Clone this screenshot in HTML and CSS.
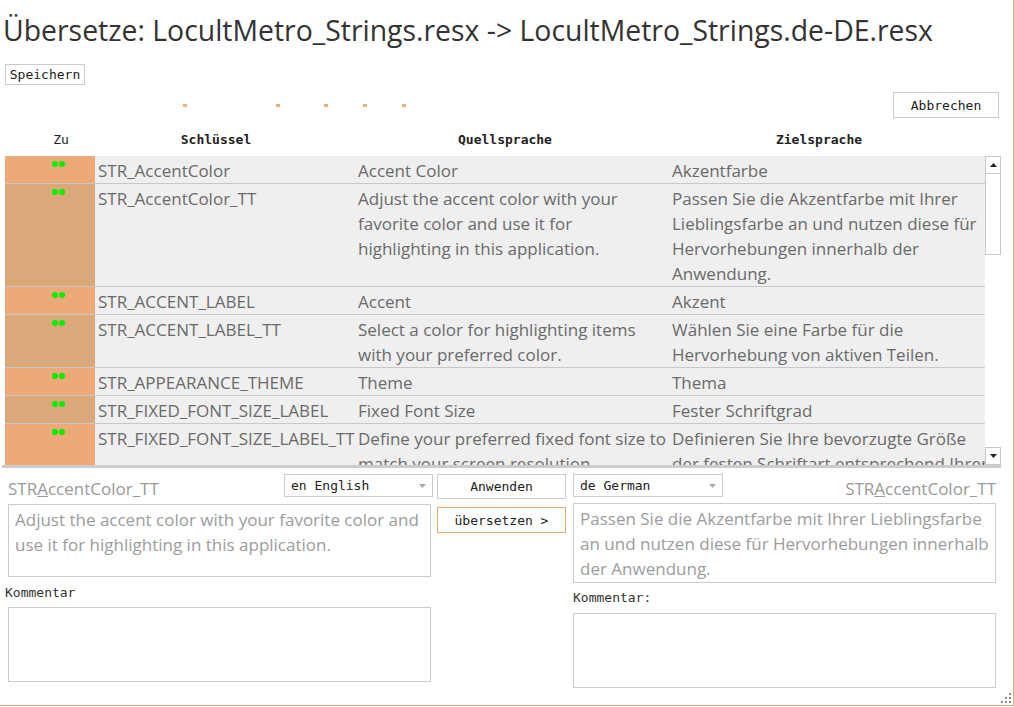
FILE: index.html
```html
<!DOCTYPE html>
<html lang="de">
<head>
<meta charset="utf-8">
<title>Übersetze</title>
<link rel="stylesheet" href="styles.css">
</head>
<body>
<div class="window">
  <h1 class="title">Übersetze: LocultMetro_Strings.resx -&gt; LocultMetro_Strings.de-DE.resx</h1>
  <div class="toolbar"><button class="btn btn-save">Speichern</button></div>
  <div class="progress-row">
    <div class="dots"><span class="pd pd1"></span><span class="pd pd2"></span><span class="pd pd3"></span><span class="pd pd4"></span><span class="pd pd5"></span></div>
    <button class="btn btn-cancel">Abbrechen</button>
  </div>
  <div class="grid-head">
    <div class="h h-zu">Zu</div>
    <div class="h h-key">Schlüssel</div>
    <div class="h h-src">Quellsprache</div>
    <div class="h h-tgt">Zielsprache</div>
  </div>
  <div class="grid">
    <div class="rows">
      <div class="row odd">
        <div class="c-status"><span class="dot"></span><span class="dot"></span></div>
        <div class="c">STR_AccentColor</div>
        <div class="c">Accent Color</div>
        <div class="c">Akzentfarbe</div>
      </div>
      <div class="row even">
        <div class="c-status"><span class="dot"></span><span class="dot"></span></div>
        <div class="c">STR_AccentColor_TT</div>
        <div class="c">Adjust the accent color with your<br>favorite color and use it for<br>highlighting in this application.</div>
        <div class="c">Passen Sie die Akzentfarbe mit Ihrer<br>Lieblingsfarbe an und nutzen diese für<br>Hervorhebungen innerhalb der<br>Anwendung.</div>
      </div>
      <div class="row odd">
        <div class="c-status"><span class="dot"></span><span class="dot"></span></div>
        <div class="c">STR_ACCENT_LABEL</div>
        <div class="c">Accent</div>
        <div class="c">Akzent</div>
      </div>
      <div class="row even">
        <div class="c-status"><span class="dot"></span><span class="dot"></span></div>
        <div class="c">STR_ACCENT_LABEL_TT</div>
        <div class="c">Select a color for highlighting items<br>with your preferred color.</div>
        <div class="c">Wählen Sie eine Farbe für die<br>Hervorhebung von aktiven Teilen.</div>
      </div>
      <div class="row odd">
        <div class="c-status"><span class="dot"></span><span class="dot"></span></div>
        <div class="c">STR_APPEARANCE_THEME</div>
        <div class="c">Theme</div>
        <div class="c">Thema</div>
      </div>
      <div class="row even">
        <div class="c-status"><span class="dot"></span><span class="dot"></span></div>
        <div class="c">STR_FIXED_FONT_SIZE_LABEL</div>
        <div class="c">Fixed Font Size</div>
        <div class="c">Fester Schriftgrad</div>
      </div>
      <div class="row odd">
        <div class="c-status"><span class="dot"></span><span class="dot"></span></div>
        <div class="c">STR_FIXED_FONT_SIZE_LABEL_TT</div>
        <div class="c">Define your preferred fixed font size to<br>match your screen resolution.</div>
        <div class="c">Definieren Sie Ihre bevorzugte Größe<br>der festen Schriftart entsprechend Ihrer<br>Bildschirmauflösung.</div>
      </div>
    </div>
    <div class="scrollbar">
      <div class="sb-btn sb-up"><svg width="7" height="4" viewBox="0 0 7 4"><path d="M0 4 L3.5 0 L7 4 Z" fill="#222"/></svg></div>
      <div class="sb-thumb"></div>
      <div class="sb-track"></div>
      <div class="sb-btn sb-down"><svg width="7" height="4" viewBox="0 0 7 4"><path d="M0 0 L3.5 4 L7 0 Z" fill="#222"/></svg></div>
    </div>
  </div>
  <div class="splitter"></div>
  <div class="editor">
    <div class="col col-left">
      <div class="top">
        <span class="keylabel">STR<u>A</u>ccentColor_TT</span>
        <div class="combo combo-en"><span>en English</span><svg width="7" height="4" viewBox="0 0 7 4"><path d="M0 0 L3.5 4 L7 0 Z" fill="#aaa"/></svg></div>
      </div>
      <div class="text text-src">Adjust the accent color with your favorite color and use it for highlighting in this application.</div>
      <div class="lbl lbl-left">Kommentar</div>
      <div class="comment comment-left"></div>
    </div>
    <div class="col col-mid">
      <button class="btn btn-apply">Anwenden</button>
      <button class="btn btn-translate">übersetzen &gt;</button>
    </div>
    <div class="col col-right">
      <div class="top">
        <div class="combo combo-de"><span>de German</span><svg width="7" height="4" viewBox="0 0 7 4"><path d="M0 0 L3.5 4 L7 0 Z" fill="#aaa"/></svg></div>
        <span class="keylabel">STR<u>A</u>ccentColor_TT</span>
      </div>
      <div class="text text-tgt">Passen Sie die Akzentfarbe mit Ihrer Lieblingsfarbe an und nutzen diese für Hervorhebungen innerhalb der Anwendung.</div>
      <div class="lbl lbl-right">Kommentar:</div>
      <div class="comment comment-right"></div>
    </div>
  </div>
  <svg class="grip" width="10" height="10" viewBox="0 0 10 10"><g fill="#8a8a8a"><rect x="8" y="0" width="2" height="2"/><rect x="4" y="4" width="2" height="2"/><rect x="8" y="4" width="2" height="2"/><rect x="0" y="8" width="2" height="2"/><rect x="4" y="8" width="2" height="2"/><rect x="8" y="8" width="2" height="2"/></g></svg>
</div>
</body>
</html>
```
FILE: styles.css
```css
html, body {
  margin: 0;
  padding: 0;
  background: #fff;
}
.window {
  position: relative;
  width: 1013px;
  height: 705px;
  border-right: 1px solid #dfa983;
  border-bottom: 1px solid #dfa983;
  overflow: hidden;
  font-family: "Open Sans", "Noto Sans", sans-serif;
}
.title {
  margin: 0;
  padding: 12px 0 0 3px;
  height: 36px;
  font-family: "Open Sans", "Noto Sans", sans-serif;
  font-weight: 400;
  font-size: 28.4px;
  line-height: 36px;
  color: #333;
  white-space: nowrap;
}
.btn {
  font-family: "DejaVu Sans Mono", "Liberation Mono", monospace;
  font-size: 13px;
  color: #222;
  background: #fff;
  border: 1px solid #ccc;
  padding: 0;
  margin: 0;
  box-sizing: border-box;
}
.toolbar {
  display: flex;
  margin-top: 16px;
  padding-left: 5px;
  height: 21px;
}
.btn-save {
  width: 80px;
  height: 21px;
}
.progress-row {
  margin-top: 7px;
  display: flex;
  align-items: center;
  justify-content: space-between;
  padding-right: 14px;
  height: 26px;
}
.dots {
  display: flex;
  align-items: center;
}
.pd {
  width: 4px;
  height: 3px;
  background: #f0ae7c;
}
.pd1 { margin-left: 183px; }
.pd2 { margin-left: 89px; }
.pd3 { margin-left: 44px; }
.pd4 { margin-left: 35px; }
.pd5 { margin-left: 35px; }
.btn-cancel {
  width: 106px;
  height: 26px;
}
.grid-head {
  display: grid;
  grid-template-columns: 90px 260px 314px 316px;
  margin: 14px 0 0 5px;
  height: 24px;
  font-family: "DejaVu Sans Mono", "Liberation Mono", monospace;
  font-size: 13px;
  font-weight: bold;
  line-height: 16px;
  color: #222;
}
.h { text-align: center; }
.h-zu { padding-left: 22px; font-weight: normal; }
.h-key { padding-right: 18px; }
.h-src { padding-right: 14px; }
.h-tgt { padding-right: 16px; }
.grid {
  display: flex;
  margin-left: 5px;
  height: 309px;
  overflow: hidden;
}
.rows {
  width: 980px;
}
.row {
  display: grid;
  grid-template-columns: 90px 260px 314px 316px;
  background: #efefef;
  border-bottom: 1px solid #c8c8c8;
  font-size: 17px;
  line-height: 25px;
  color: #6a6a6a;
}
.row.odd .c-status { background: #edaa78; }
.row.even .c-status { background: #dba979; }
.c-status {
  display: flex;
  justify-content: center;
  align-items: flex-start;
  padding: 5px 0 0 16px;
  gap: 1px;
}
.dot {
  width: 6px;
  height: 6px;
  border-radius: 50%;
  background: #00ee00;
}
.c {
  padding: 2px 0 0 3px;
  white-space: nowrap;
  overflow: hidden;
}
.scrollbar {
  width: 16px;
  display: flex;
  flex-direction: column;
  background: #fff;
}
.sb-btn {
  box-sizing: border-box;
  height: 17px;
  border: 1px solid #c8c8c8;
  display: flex;
  align-items: center;
  justify-content: center;
}
.sb-up { border-bottom: none; }
.sb-thumb {
  box-sizing: border-box;
  height: 82px;
  border: 1px solid #c8c8c8;
}
.sb-track { flex: 1; }
.sb-down { height: 18px; }
.splitter {
  margin-left: 2px;
  width: 999px;
  height: 3px;
  background: #cccccc;
}
.editor {
  display: flex;
  align-items: flex-start;
}
.col {
  display: flex;
  flex-direction: column;
}
.col-left {
  margin-left: 5px;
  width: 428px;
}
.col-mid {
  margin-left: 4px;
  width: 129px;
}
.col-right {
  margin-left: 7px;
  width: 424px;
}
.top {
  display: flex;
  justify-content: space-between;
  align-items: flex-start;
  margin-top: 6px;
  height: 27px;
  margin-bottom: -3px;
}
.keylabel {
  font-size: 17px;
  line-height: 25px;
  color: #9a9a9a;
  margin-top: 2px;
  white-space: nowrap;
}
.col-left .keylabel { padding-left: 3px; }
.col-right .keylabel { padding-right: 1px; }
.combo {
  box-sizing: border-box;
  height: 23px;
  border: 1px solid #ccc;
  display: flex;
  align-items: center;
  justify-content: space-between;
  padding: 0 6px 0 6px;
  font-family: "DejaVu Sans Mono", "Liberation Mono", monospace;
  font-size: 13px;
  color: #222;
}
.combo-en { width: 149px; }
.combo-de { width: 150px; }
.text {
  box-sizing: border-box;
  border: 1px solid #ccc;
  font-size: 17px;
  line-height: 25px;
  color: #9c9c9c;
  padding: 2px 6px;
}
.text-src {
  margin: 6px 0 0 3px;
  width: 423px;
  height: 73px;
}
.text-tgt {
  margin-top: 5px;
  width: 423px;
  height: 80px;
}
.lbl {
  font-family: "DejaVu Sans Mono", "Liberation Mono", monospace;
  font-size: 13px;
  line-height: 16px;
  color: #333;
}
.lbl-left { margin-top: 8px; }
.lbl-right { margin-top: 7px; }
.comment {
  box-sizing: border-box;
  border: 1px solid #ccc;
  width: 423px;
  height: 75px;
}
.comment-left { margin: 6px 0 0 3px; }
.comment-right { margin-top: 7px; }
.btn-apply {
  margin-top: 6px;
  height: 25px;
  width: 129px;
}
.btn-translate {
  margin-top: 8px;
  height: 26px;
  width: 129px;
  border-color: #f0a566;
}
.grip {
  position: absolute;
  right: 2px;
  bottom: 2px;
}
```
